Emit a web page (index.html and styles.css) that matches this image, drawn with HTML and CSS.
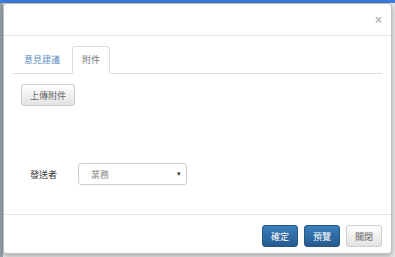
FILE: index.html
```html
<!DOCTYPE html>
<html>
<head>
  <meta charset="utf-8">
  <title>意見建議</title>
  <link rel="stylesheet" href="styles.css">
</head>
<body>
  <div class="backdrop">
    <div class="modal">
      <div class="modal-header">
        <span class="close">&times;</span>
      </div>
      <div class="modal-body">
        <ul class="nav-tabs">
          <li><a href="#">意見建議</a></li>
          <li class="active"><a href="#">附件</a></li>
        </ul>
        <div class="tab-pane">
          <button class="btn btn-default">上傳附件</button>
          <div class="form-row">
            <label>發送者</label>
            <div class="select">
              <span>業務</span>
              <span class="caret">&#9662;</span>
            </div>
          </div>
        </div>
      </div>
      <div class="modal-footer">
        <button class="btn btn-primary">確定</button>
        <button class="btn btn-primary">預覽</button>
        <button class="btn btn-default">關閉</button>
      </div>
    </div>
  </div>
</body>
</html>
```

FILE: styles.css
```css
/* General Styling */
body {
  margin: 0;
  padding: 0;
  font-family: "Liberation Sans", "Noto Sans CJK TC", sans-serif;
  font-size: 9px;
  color: #333;
}

.backdrop {
  height: 257px;
  box-sizing: border-box;
  padding: 3px 3px 3px 3px;
  background:
    linear-gradient(#3b7ddd, #3b7ddd) top left / 100% 3px no-repeat,
    linear-gradient(#9aa3a8, #9aa3a8) top left / 3px 100% no-repeat,
    #e9eaea;
}

.modal {
  height: 251px;
  box-sizing: border-box;
  background: white;
  border: 1px solid rgba(0, 0, 0, 0.25);
  border-radius: 4px;
  box-shadow: 0 2px 6px rgba(0, 0, 0, 0.3);
  display: flex;
  flex-direction: column;
}

.modal-header {
  height: 31px;
  flex: none;
  border-bottom: 1px solid #e5e5e5;
  display: flex;
  justify-content: flex-end;
  align-items: center;
  padding: 0 9px;
}

.close {
  color: #b5b5b5;
  font-size: 12px;
  font-weight: bold;
  margin-top: 1px;
}

.modal-body {
  flex: 1;
  padding: 10px 9px 0 9px;
}

.nav-tabs {
  list-style: none;
  margin: 0;
  padding: 0;
  display: flex;
  border-bottom: 1px solid #ddd;
  height: 27px;
}

.nav-tabs li {
  margin-right: 2px;
  margin-bottom: -1px;
}

.nav-tabs a {
  display: block;
  height: 28px;
  line-height: 27px;
  padding: 0 9px 0 10px;
  color: #5a8fc2;
  text-decoration: none;
  border: 1px solid transparent;
  border-radius: 4px 4px 0 0;
  box-sizing: border-box;
}

.nav-tabs .active a {
  color: #777;
  background: white;
  padding: 0 9px;
  border-color: #ddd #ddd transparent;
}

.tab-pane {
  padding: 10px 0 0 8px;
}

.btn {
  font-family: inherit;
  font-size: 9px;
  height: 22px;
  padding: 0 8px;
  border-radius: 3px;
  border: 1px solid #ccc;
  cursor: pointer;
}

.btn-default {
  color: #666;
  background: linear-gradient(#fff, #e2e2e2);
  border-color: #ccc;
}

.btn-primary {
  color: white;
  background: linear-gradient(#3a7fbd, #265a8e);
  border-color: #245580;
}

.form-row {
  display: flex;
  align-items: center;
  margin-top: 57px;
  padding-left: 9px;
}

.form-row label {
  width: 48px;
  color: #333;
}

.select {
  width: 109px;
  height: 22px;
  box-sizing: border-box;
  border: 1px solid #ccc;
  border-radius: 3px;
  display: flex;
  align-items: center;
  justify-content: space-between;
  padding: 0 5px 0 12px;
  color: #888;
}

.caret {
  font-size: 7px;
  color: #333;
}

.modal-footer {
  border-top: 1px solid #e5e5e5;
  height: 39px;
  flex: none;
  box-sizing: border-box;
  display: flex;
  justify-content: flex-end;
  align-items: flex-start;
  gap: 6px;
  padding: 10px 9px 0 0;
}

.modal-footer .btn {
  min-width: 35px;
}
```
